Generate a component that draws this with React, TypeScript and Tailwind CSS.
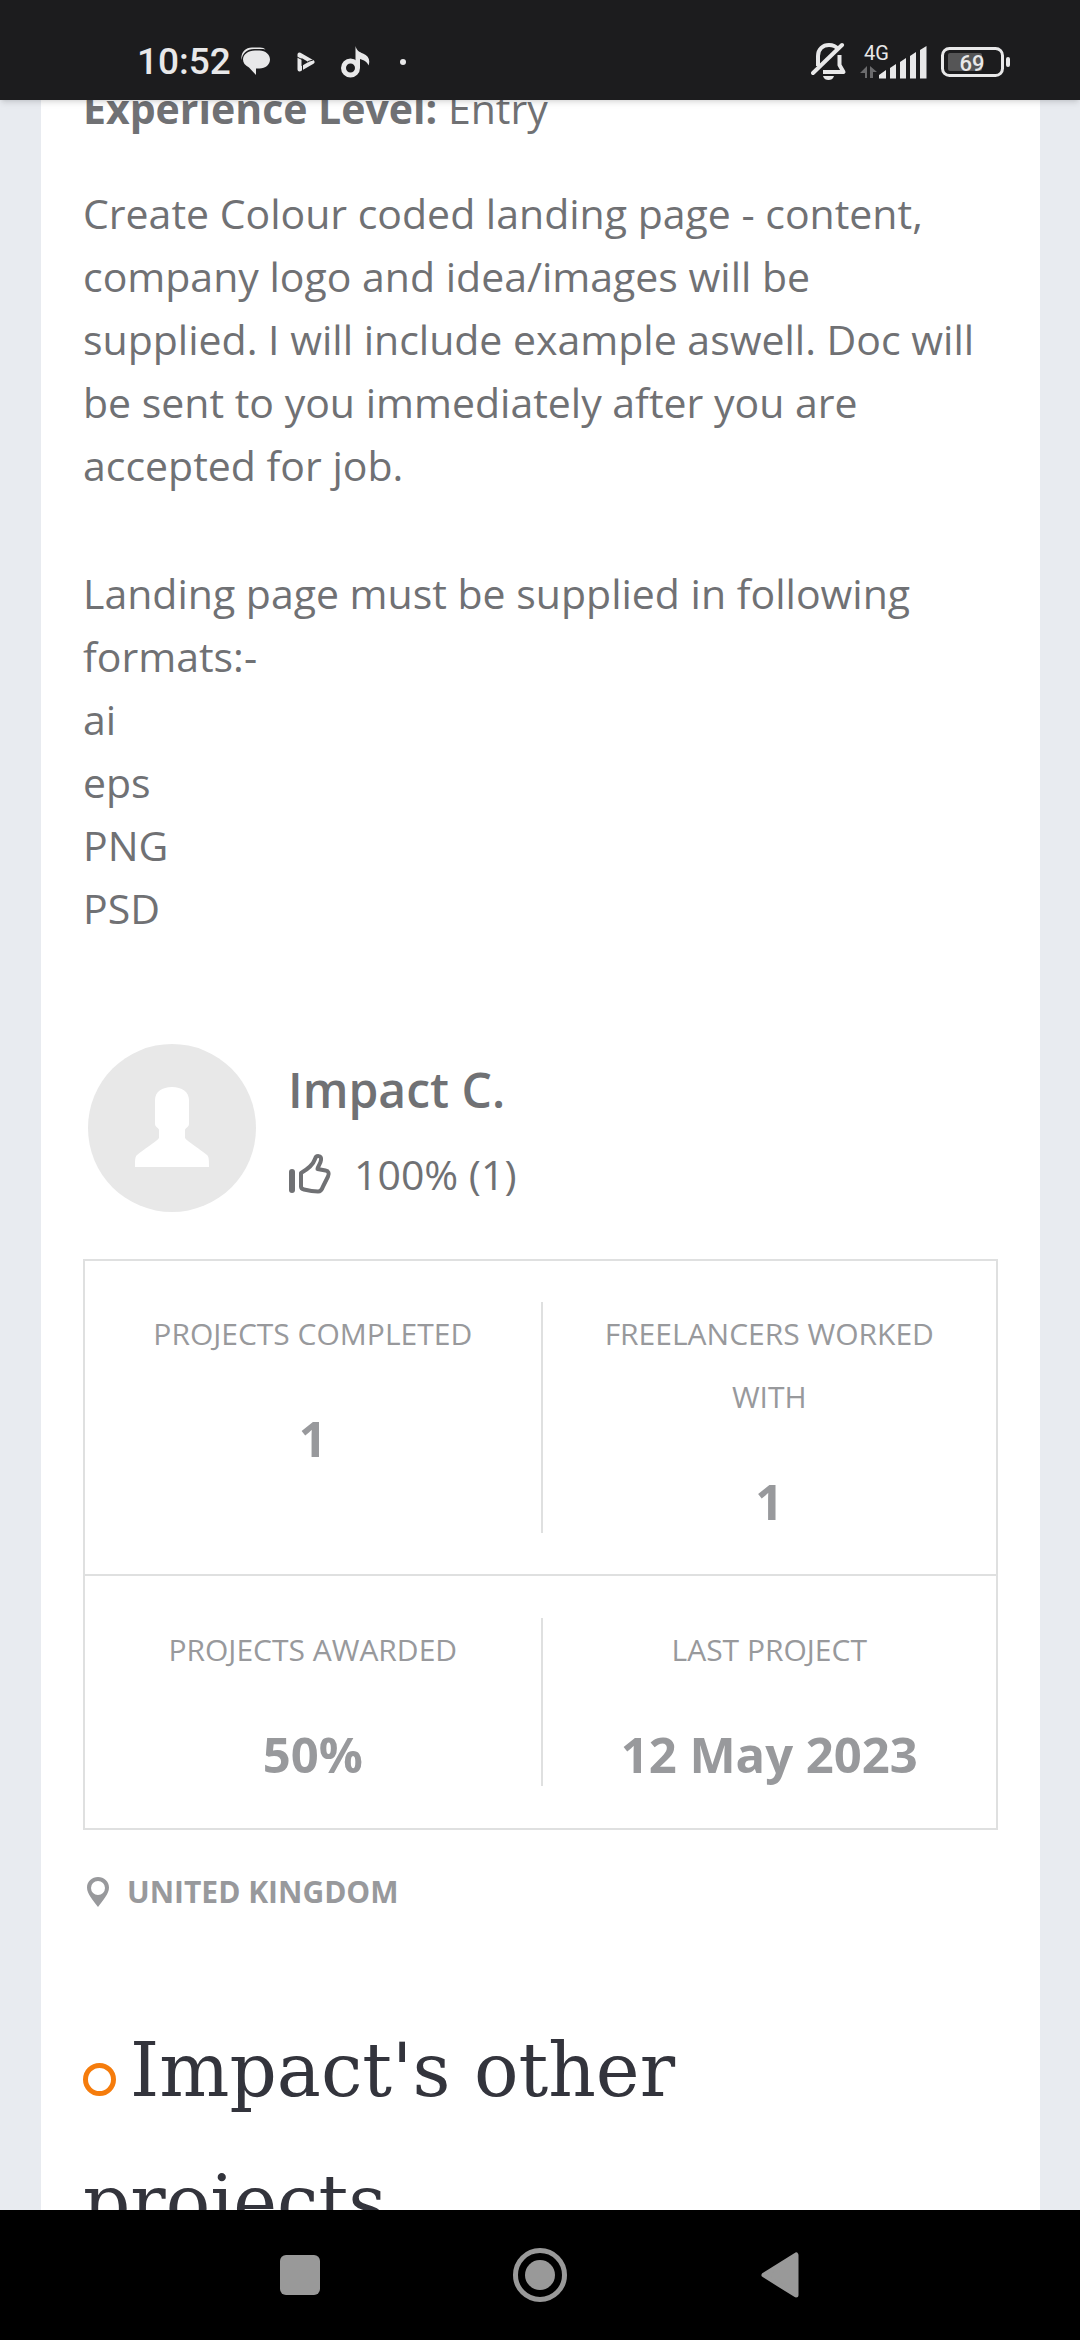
import type { ReactNode } from "react";

interface StatProps {
    label: string;
    value: string;
    divided?: boolean;
}

const formats = ["ai", "eps", "PNG", "PSD"];

const MessagesIcon = () => (
    <svg width="30" height="30" viewBox="0 0 30 30" fill="#e8e8e9" aria-hidden="true">
        <path d="M.5 13C-.5 6 4 .5 11 .5h8c2.500 0 4.500.7 5.500 2-2-.5-3-.5-5-.5H13C6 2 1.500 6 .5 13z" />
        <path d="M14 3.500h4.500c6 0 10.500 4 10.500 9s-4.500 9-10.500 9h-3.500V28l-7-7.500c-4-2-6-5-6-8 0-5 5-9 12-9z" />
    </svg>
);

const PlayIcon = () => (
    <svg width="18" height="20" viewBox="0 0 18 20" fill="none" aria-hidden="true">
        <path d="M2.500 2.500v15L15.500 10z" stroke="#e8e8e9" strokeWidth="4" strokeLinejoin="round" />
        <path d="M0 5l5 2.500M5.500 13v6M11 9.500l5-1.500" stroke="#1c1c1e" />
    </svg>
);

const MusicIcon = () => (
    <svg width="29" height="32" viewBox="0 0 29 32" fill="none" aria-hidden="true">
        <circle cx="9.500" cy="22" r="7" stroke="#e8e8e9" strokeWidth="5" />
        <path d="M14.500 22V0c1 4.500 4 6 7.500 7.500 5.500 2.500 7.500 6 5.500 12-1.500-4-4.500-5.500-8.500-6.500v9z" fill="#e8e8e9" />
    </svg>
);

const BellOffIcon = () => (
    <svg width="36" height="40" viewBox="0 0 36 40" fill="none" stroke="#e8e8e9" strokeWidth="4" aria-hidden="true">
        <path d="M7 24V14C7 7 12 3 18 3c4 0 7 1.500 9 4" />
        <path d="M28.500 13v10l4 7H12" strokeLinejoin="round" />
        <path d="M2 31L31 3" strokeLinecap="round" />
        <path d="M12 34h11c-1 3-3 4-5.500 4S13 37 12 34z" fill="#e8e8e9" stroke="none" />
    </svg>
);

const SignalIcon = () => (
    <svg className="overflow-visible" width="68" height="36" viewBox="0 0 68 36" fill="#e8e8e9" role="img" aria-label="4G signal">
        <text x="4" y="16" fontFamily="Roboto, sans-serif" fontSize="20">4G</text>
        <path d="M5 34v-5H0l7-7v12zM10 34V22l7 6h-4v6z" fill="#6b6b6d" />
        <path d="M19 34.500v-3.500l7-5v8.500zM30 34.500V24l6-4v14.500zM40 34.500V18l6-4v20.500zM50 34.500V12l6-4v26.500zM60 34.500V6l6.500-4v32.500z" />
    </svg>
);

const BatteryIcon = () => (
    <svg width="70" height="30" viewBox="0 0 70 30" role="img" aria-label="Battery 69%">
        <rect x="1.500" y="1.500" width="60" height="27" rx="7" fill="none" stroke="#e8e8e9" strokeWidth="3" />
        <rect x="7" y="6" width="34" height="18" rx="2" fill="#555556" />
        <rect x="65" y="10" width="4" height="10" rx="2" fill="#e8e8e9" />
        <text x="31" y="24" textAnchor="middle" fill="#e8e8e9" fontFamily="Roboto, sans-serif" fontSize="22" fontWeight="500">69</text>
    </svg>
);

const Avatar = () => (
    <svg width="168" height="168" viewBox="0 0 168 168" aria-hidden="true">
        <circle cx="84" cy="84" r="84" fill="#e8e8e8" />
        <path
            d="M67 56c0-8 7-13 17-13s17 5 17 13v24c0 3-4 4-4 6v8c3 4 15 11 22 17 2 2 2 5 2 12H47c0-7 0-10 2-12 7-6 19-13 22-17v-8c0-2-4-3-4-6z"
            fill="#fff"
        />
    </svg>
);

const ThumbUpIcon = () => (
    <svg
        className="overflow-visible"
        width="42"
        height="42"
        viewBox="0 -2 42 42"
        fill="none"
        stroke="#707174"
        strokeWidth="4"
        strokeLinejoin="round"
        aria-hidden="true"
    >
        <path d="M4 16v18" strokeWidth="6" strokeLinecap="round" />
        <path d="M13 17c7-4 12-8 14-14 1-4 7-4 6 1-.5 4-3 6-3.500 9l8 1.500c3 .5 4 3 2.500 6l-5 10c-1 3-2 5-5 5-5 0-10-1-14-2-2-.5-3-1-3-3z" />
    </svg>
);

const PinIcon = () => (
    <svg width="22" height="30" viewBox="0 0 22 30" aria-hidden="true">
        <path
            fillRule="evenodd"
            d="M11 0c6 0 11 4.500 11 10.500C22 17 16 23 11 30 6 23 0 17 0 10.500 0 4.500 5 0 11 0zm0 4a7 7 0 1 0 0 14 7 7 0 0 0 0-14z"
            fill="#98999c"
        />
    </svg>
);

const Stat = ({ label, value, divided }: StatProps) => (
    <div className={divided ? "flex flex-col gap-[42px] border-l-2 border-[#dfe0e0] px-10" : "flex flex-col gap-[42px] px-10"}>
        <dt className="text-[30px] leading-[63px] uppercase">{label}</dt>
        <dd className="text-[49px] leading-[63px] font-bold">{value}</dd>
    </div>
);

const NavButton = ({ label, children }: { label: string; children: ReactNode }) => (
    <button aria-label={label} className="flex size-15 items-center justify-center">
        {children}
    </button>
);

export default function App() {
    return (
        <div className="flex h-screen flex-col overflow-hidden bg-[#e8ebf0] font-['Open_Sans',sans-serif] text-[41px] leading-[63px] text-[#707174]">
            <header className="z-10 flex h-[100px] shrink-0 items-center justify-between bg-[#1c1c1e] pt-6 pr-[69px] pl-[137px] shadow-md">
                <div className="flex items-center">
                    <time className="font-[Roboto,sans-serif] text-[37px] leading-10 font-medium text-[#e8e8e9]">10:52</time>
                    <div className="ml-[10px] flex items-center gap-[26px]">
                        <MessagesIcon />
                        <PlayIcon />
                        <MusicIcon />
                        <span className="ml-1 size-[6px] rounded-full bg-[#e8e8e9]" />
                    </div>
                </div>
                <div className="flex items-center gap-[13px]">
                    <BellOffIcon />
                    <SignalIcon />
                    <BatteryIcon />
                </div>
            </header>

            <main className="mr-10 ml-[41px] min-h-0 flex-1 overflow-hidden bg-white px-[42px]">
                <p className="-mt-[23px]">
                    <strong className="font-bold">Experience Level:</strong> Entry
                </p>
                <p className="mt-[42px]">
                    Create Colour coded landing page - content, company logo and idea/images will be
                    <br />
                    supplied. I will include example aswell. Doc will be sent to you immediately after you are
                    accepted for job.
                </p>
                <p className="mt-[65px]">Landing page must be supplied in following formats:-</p>
                <ul>
                    {formats.map((format) => (
                        <li key={format}>{format}</li>
                    ))}
                </ul>

                <section className="mt-[104px] flex items-start gap-8 pl-[5px]">
                    <Avatar />
                    <div className="flex flex-col gap-[22px] pt-[14px]">
                        <h2 className="text-5xl leading-[63px] font-semibold">Impact C.</h2>
                        <div className="flex items-center gap-6">
                            <ThumbUpIcon />
                            <span>100% (1)</span>
                        </div>
                    </div>
                </section>

                <dl className="mt-[47px] border-2 border-[#dfe0e0] text-center text-[#98999c]">
                    <div className="grid grid-cols-2 py-[41px]">
                        <Stat label="Projects completed" value="1" />
                        <Stat label="Freelancers worked with" value="1" divided />
                    </div>
                    <div className="grid grid-cols-2 border-t-2 border-[#dfe0e0] py-[42px]">
                        <Stat label="Projects awarded" value="50%" />
                        <Stat label="Last project" value="12 May 2023" divided />
                    </div>
                </dl>

                <p className="mt-[30px] flex items-center gap-[18px] pl-1 text-[30px] leading-[63px] font-bold text-[#98999c] uppercase">
                    <PinIcon />
                    United Kingdom
                </p>

                <h1 className="mt-[81px] font-['DejaVu_Serif',serif] text-[74px] leading-[132px] text-[#33343c]">
                    <span className="mr-[14px] inline-block size-[33px] rounded-full border-5 border-[#f57c0c]" />
                    Impact's other
                    <br />
                    projects
                </h1>
            </main>

            <nav className="z-10 flex h-[130px] shrink-0 items-center justify-center gap-[180px] bg-black">
                <NavButton label="Recent apps">
                    <span className="size-10 rounded-md bg-[#999]" />
                </NavButton>
                <NavButton label="Home">
                    <span className="flex size-[54px] items-center justify-center rounded-full border-5 border-[#999]">
                        <span className="size-[30px] rounded-full bg-[#999]" />
                    </span>
                </NavButton>
                <NavButton label="Back">
                    <svg width="38" height="46" viewBox="0 0 38 46" aria-hidden="true">
                        <path d="M3 23L35 3v40z" fill="#999" stroke="#999" strokeWidth="5" strokeLinejoin="round" />
                    </svg>
                </NavButton>
            </nav>
        </div>
    );
}
